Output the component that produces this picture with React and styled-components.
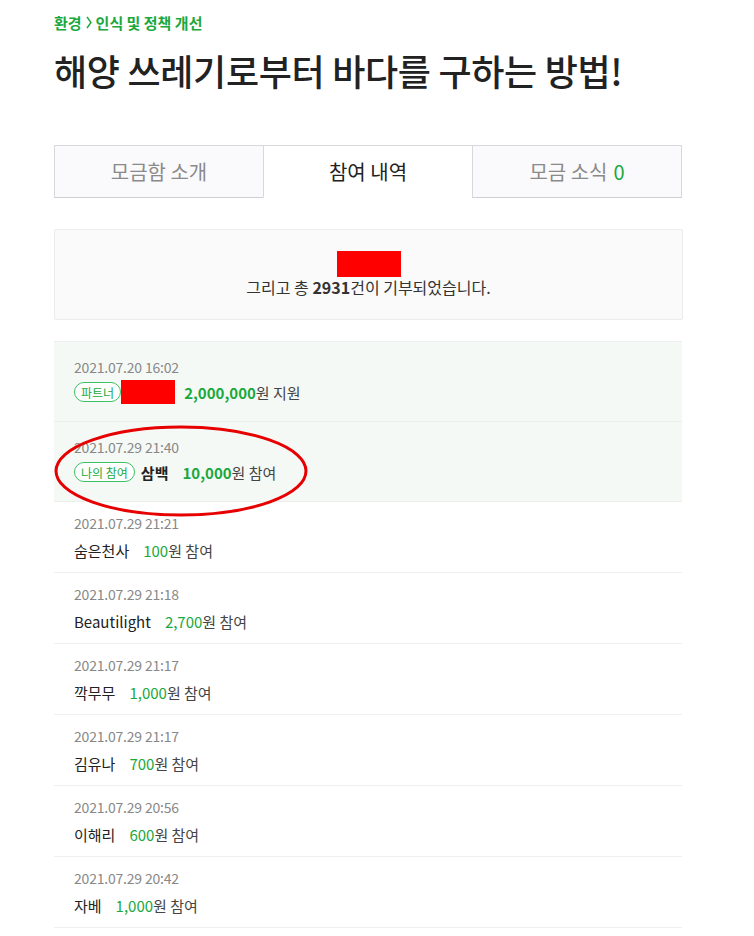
import React from 'react';
import styled, { createGlobalStyle } from 'styled-components';

const GREEN = '#1aa83c';

const GlobalStyle = createGlobalStyle`
	body {
		margin: 0;
		background: #fff;
		font-family: 'Noto Sans CJK KR', 'Noto Sans', sans-serif;
		color: #222;
	}
`;

const Page = styled.div`
	width: 629px;
	margin-left: 54px;
	padding: 12px 0 40px;
`;

const Breadcrumb = styled.div`
	display: flex;
	align-items: center;
	gap: 2px;
	height: 20px;
	font-size: 15px;
	font-weight: 700;
	color: ${GREEN};

	& svg {
		margin: 0 2px;
	}
`;

const Title = styled.h1`
	margin: 16px 0 0;
	font-size: 36px;
	line-height: 44px;
	font-weight: 500;
	letter-spacing: -0.3px;
	color: #222;
`;

const TabList = styled.div`
	display: flex;
	margin-top: 53px;
	width: 628px;
`;

const Tab = styled.div`
	flex: 1;
	display: flex;
	align-items: center;
	justify-content: center;
	height: 51px;
	margin-left: -1px;
	border: 1px solid #d8d8dc;
	border-bottom-color: ${(p) => (p.$active ? 'transparent' : '#d0d0d4')};
	background: ${(p) => (p.$active ? '#fff' : '#fafafc')};
	color: ${(p) => (p.$active ? '#222' : '#8a8a8a')};
	font-size: 20px;

	&:first-child {
		margin-left: 0;
	}

	& em {
		font-style: normal;
		color: ${GREEN};
		margin-left: 6px;
	}
`;

const Summary = styled.div`
	display: flex;
	flex-direction: column;
	align-items: center;
	margin-top: 31px;
	padding: 21px 0 22px;
	border: 1px solid #ececec;
	border-radius: 2px;
	background: #fafafa;
`;

const Redacted = styled.span`
	display: inline-block;
	width: ${(p) => p.$w}px;
	height: ${(p) => p.$h}px;
	background: #ff0000;
	vertical-align: middle;
`;

const SummaryText = styled.p`
	margin: 0;
	font-size: 16px;
	line-height: 20px;
	color: #333;

	& b {
		font-weight: 700;
	}
`;

const List = styled.ul`
	position: relative;
	list-style: none;
	margin: 21px 0 0;
	padding: 0;
	width: 628px;
	border-top: 1px solid #f0f0f0;
`;

const Row = styled.li`
	padding: ${(p) => (p.$highlight ? '16px 20px 17px' : '12px 20px 11px')};
	background: ${(p) => (p.$highlight ? '#f5f9f6' : '#fff')};
	border-bottom: 1px solid ${(p) => (p.$highlight ? '#ecf0ed' : '#efefef')};
`;

const Date = styled.div`
	font-size: 14px;
	line-height: 18px;
	color: #888;
	letter-spacing: -0.2px;
`;

const Line = styled.div`
	display: flex;
	align-items: center;
	margin-top: ${(p) => (p.$highlight ? '4px' : '7px')};
	height: ${(p) => (p.$highlight ? '24px' : '22px')};
	font-size: 15px;
	color: #222;
`;

const Badge = styled.span`
	display: inline-flex;
	align-items: center;
	height: 18px;
	padding: 0 6px;
	margin-right: 6px;
	border: 1px solid #3cc264;
	border-radius: 10px;
	background: #fff;
	font-size: 12px;
	color: ${GREEN};
`;

const Name = styled.span`
	font-weight: ${(p) => (p.$bold ? 700 : 400)};
	margin-right: 14px;
`;

const Amount = styled.span`
	color: #444;

	& b {
		color: ${GREEN};
		font-weight: ${(p) => (p.$bold ? 700 : 400)};
	}
`;

const Circle = styled.svg`
	position: absolute;
	left: 0;
	top: 82px;
	pointer-events: none;
`;

const Chevron = () => (
	<svg width="6" height="13" viewBox="0 0 6 13">
		<path d="M1 1 L5 6.5 L1 12" fill="none" stroke={GREEN} strokeWidth="1.4" />
	</svg>
);

const donations = [
	{ date: '2021.07.29 21:21', name: '숨은천사', amount: '100' },
	{ date: '2021.07.29 21:18', name: 'Beautilight', amount: '2,700' },
	{ date: '2021.07.29 21:17', name: '깍무무', amount: '1,000' },
	{ date: '2021.07.29 21:17', name: '김유나', amount: '700' },
	{ date: '2021.07.29 20:56', name: '이해리', amount: '600' },
	{ date: '2021.07.29 20:42', name: '자베', amount: '1,000' },
];

const App = () => (
	<>
		<GlobalStyle />
		<Page>
			<Breadcrumb>
				환경
				<Chevron />
				인식 및 정책 개선
			</Breadcrumb>
			<Title>해양 쓰레기로부터 바다를 구하는 방법!</Title>

			<TabList>
				<Tab>모금함 소개</Tab>
				<Tab $active>참여 내역</Tab>
				<Tab>
					모금 소식<em>0</em>
				</Tab>
			</TabList>

			<Summary>
				<Redacted $w={64} $h={26} />
				<SummaryText>
					그리고 총 <b>2931</b>건이 기부되었습니다.
				</SummaryText>
			</Summary>

			<List>
				<Row $highlight>
					<Date>2021.07.20 16:02</Date>
					<Line $highlight>
						<Badge>파트너</Badge>
						<Redacted $w={54} $h={24} style={{ marginLeft: -6, marginRight: 9 }} />
						<Amount $bold>
							<b>2,000,000</b>원 지원
						</Amount>
					</Line>
				</Row>
				<Row $highlight>
					<Date>2021.07.29 21:40</Date>
					<Line $highlight>
						<Badge>나의 참여</Badge>
						<Name $bold>삼백</Name>
						<Amount $bold>
							<b>10,000</b>원 참여
						</Amount>
					</Line>
				</Row>
				{donations.map((d, i) => (
					<Row key={i}>
						<Date>{d.date}</Date>
						<Line>
							<Name>{d.name}</Name>
							<Amount>
								<b>{d.amount}</b>원 참여
							</Amount>
						</Line>
					</Row>
				))}
				<Circle width="256" height="94" viewBox="0 0 256 94">
					<ellipse cx="127" cy="47" rx="125" ry="44" fill="none" stroke="#e60000" strokeWidth="3" />
				</Circle>
			</List>
		</Page>
	</>
);

export default App;
